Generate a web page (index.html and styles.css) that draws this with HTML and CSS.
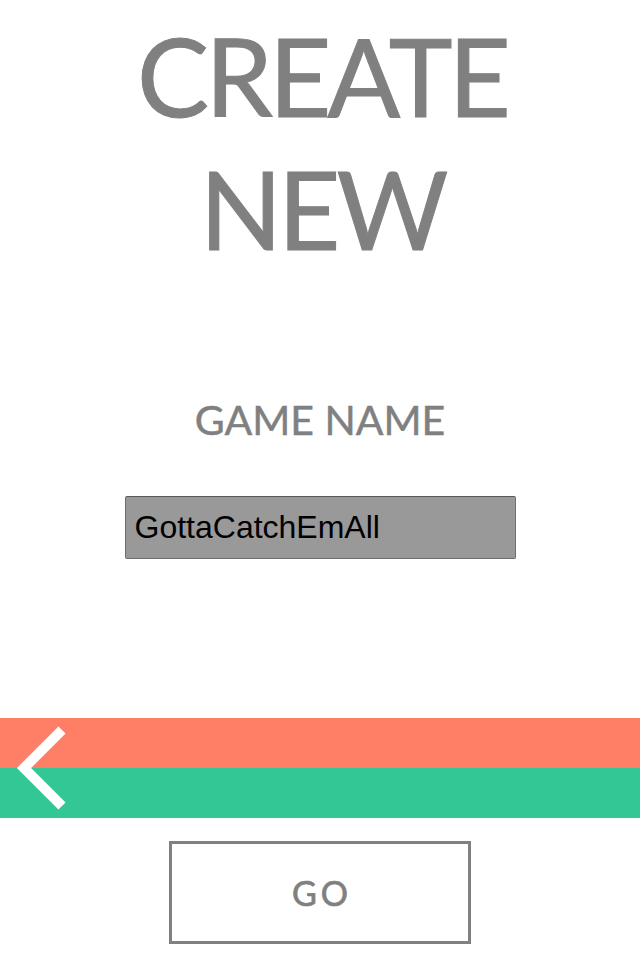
FILE: index.html
```html
<!DOCTYPE html>
<html>
<head>
<meta charset="utf-8">
<link rel="stylesheet" href="styles.css">
</head>
<body>
<div class="screen">
  <h1 class="title">CREATE<br>NEW</h1>
  <div class="label">GAME NAME</div>
  <div class="field"><span class="field-text">GottaCatchEmAll</span></div>
  <div class="bars">
    <div class="bar bar-red"></div>
    <div class="bar bar-green"></div>
    <svg class="back" width="80" height="100" viewBox="0 0 80 100">
      <polyline points="62,12 24,50 62,88" fill="none" stroke="#ffffff" stroke-width="10" stroke-linecap="butt" stroke-linejoin="miter"/>
    </svg>
  </div>
  <div class="go-wrap">
    <div class="go"><span class="go-text">GO</span></div>
  </div>
</div>
</body>
</html>
```
FILE: styles.css
```css
html, body {
  margin: 0;
  padding: 0;
  background: #ffffff;
}
.screen {
  width: 640px;
  height: 960px;
  display: flex;
  flex-direction: column;
  align-items: center;
  font-family: Lato, "Open Sans", sans-serif;
  color: #808080;
}
.title {
  margin: 9px 0 0 0;
  padding-left: 4px;
  font-size: 108px;
  line-height: 133px;
  font-weight: 400;
  text-align: center;
  letter-spacing: -4px;
  -webkit-text-stroke: 1px #808080;
}
.label {
  margin-top: 120px;
  font-size: 41px;
  line-height: 50px;
  font-weight: 400;
  letter-spacing: 0;
  -webkit-text-stroke: 0.5px #808080;
}
.field {
  margin-top: 51px;
  width: 391px;
  height: 63px;
  box-sizing: border-box;
  background: #999999;
  border: 1px solid #6e6e6e;
  border-top-color: #5a5a5a;
  border-radius: 2px;
  display: flex;
  align-items: center;
  padding-left: 9px;
  font-family: "Liberation Sans", Arial, sans-serif;
  font-size: 32px;
  color: #000000;
}
.bars {
  position: relative;
  margin-top: 159px;
  width: 640px;
  display: flex;
  flex-direction: column;
}
.bar {
  height: 50px;
}
.bar-red {
  background: #fe7f66;
}
.bar-green {
  background: #33c795;
}
.back {
  position: absolute;
  left: 0;
  top: 0;
}
.go-wrap {
  margin-top: 23px;
}
.go {
  width: 302px;
  height: 103px;
  box-sizing: border-box;
  border: 3px solid #808080;
  display: flex;
  align-items: center;
  justify-content: center;
  font-size: 34px;
  font-weight: 400;
}
.go-text {
  letter-spacing: 4px;
  padding-left: 4px;
  -webkit-text-stroke: 0.7px #808080;
}
```
